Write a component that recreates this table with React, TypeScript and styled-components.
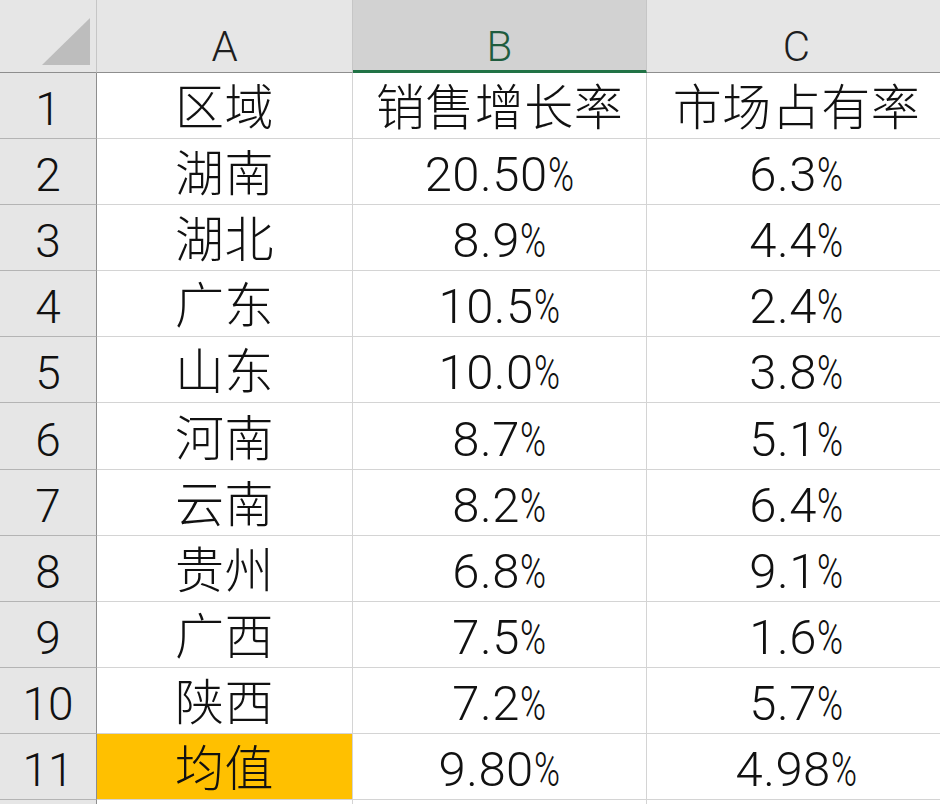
import React from 'react'
import styled, { createGlobalStyle } from 'styled-components'

const GlobalStyle = createGlobalStyle`
  html, body {
    margin: 0;
    padding: 0;
    background: #ffffff;
    overflow: hidden;
  }
  * {
    box-sizing: border-box;
  }
`

const theme = {
  head: '#e6e6e6',
  headActive: '#d2d2d2',
  headLine: '#c6c6c6',
  edge: '#8e8e8e',
  grid: '#d4d4d4',
  green: '#217346',
  gold: '#ffc000',
  text: '#111111',
}

const font = `Roboto, "Noto Sans CJK SC", sans-serif`

const columns = ['A', 'B', 'C']
const activeColumn = 'B'

const rows: string[][] = [
  ['区域', '销售增长率', '市场占有率'],
  ['湖南', '20.50%', '6.3%'],
  ['湖北', '8.9%', '4.4%'],
  ['广东', '10.5%', '2.4%'],
  ['山东', '10.0%', '3.8%'],
  ['河南', '8.7%', '5.1%'],
  ['云南', '8.2%', '6.4%'],
  ['贵州', '6.8%', '9.1%'],
  ['广西', '7.5%', '1.6%'],
  ['陕西', '7.2%', '5.7%'],
  ['均值', '9.80%', '4.98%'],
]

// cells that carry a fill colour, keyed "row:col"
const fills: Record<string, string> = {
  '10:0': theme.gold,
}

const renderValue = (value: string) => {
  if (!value.endsWith('%')) return value
  return (
    <>
      {value.slice(0, -1)}
      <Pct>%</Pct>
    </>
  )
}

export default function App() {
  return (
    <>
      <GlobalStyle />
      <Sheet>
        <Corner>
          <svg width="49" height="48" viewBox="0 0 49 48">
            <polygon points="48,0 48,47 0,47" fill="#bdbdbd" />
          </svg>
        </Corner>
        {columns.map(col => (
          <ColHead key={col} $active={col === activeColumn}>
            {col}
          </ColHead>
        ))}

        {rows.map((row, r) => (
          <React.Fragment key={r}>
            <RowHead>{r + 1}</RowHead>
            {row.map((value, c) => (
              <Cell key={c} $fill={fills[`${r}:${c}`]}>
                {renderValue(value)}
              </Cell>
            ))}
          </React.Fragment>
        ))}

        {/* top sliver of the next row, cut by the window */}
        <RowHead />
        {columns.map(col => <Cell key={col} />)}
      </Sheet>
    </>
  )
}

const Sheet = styled.div`
  display: grid;
  grid-template-columns: 97px 256px 294px 300px;
  grid-template-rows: 73px repeat(12, 66.1px);
  width: 947px;
  font-family: ${font};
  font-weight: 300;
  color: ${theme.text};
`

const Corner = styled.div`
  background: ${theme.head};
  border-right: 1px solid ${theme.headLine};
  border-bottom: 1px solid ${theme.edge};
  display: flex;
  align-items: flex-end;
  justify-content: flex-end;
  padding: 0 5px 6px 0;
`

const ColHead = styled.div<{ $active?: boolean }>`
  display: flex;
  align-items: flex-end;
  justify-content: center;
  padding-bottom: ${p => (p.$active ? 2 : 4)}px;
  font-size: 42px;
  line-height: 1;
  background: ${p => (p.$active ? theme.headActive : theme.head)};
  color: ${p => (p.$active ? '#1f5c3e' : '#1e1e1e')};
  border-right: 1px solid ${theme.headLine};
  border-bottom: ${p => (p.$active ? `3px solid ${theme.green}` : `1px solid ${theme.edge}`)};
`

const RowHead = styled.div`
  display: flex;
  align-items: flex-end;
  justify-content: center;
  padding-bottom: 6px;
  font-size: 46px;
  line-height: 1;
  background: ${theme.head};
  color: #111111;
  border-right: 1px solid ${theme.edge};
  border-bottom: 1px solid #b4b4b4;
`

const Cell = styled.div<{ $fill?: string }>`
  display: flex;
  align-items: flex-end;
  justify-content: center;
  padding-bottom: 5px;
  font-size: 49px;
  letter-spacing: 0.5px;
  line-height: 1;
  white-space: nowrap;
  background: ${p => p.$fill || '#ffffff'};
  border-right: 1px solid ${theme.grid};
  border-bottom: 1px solid ${theme.grid};
`

const Pct = styled.span`
  display: inline-block;
  transform: scaleX(0.72);
  transform-origin: left center;
  margin-right: -10px;
`
